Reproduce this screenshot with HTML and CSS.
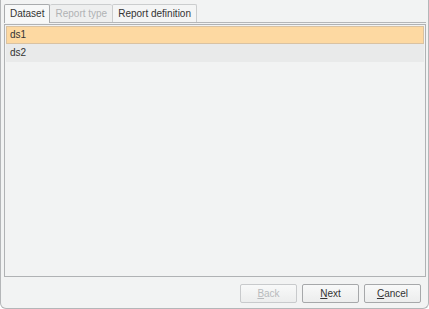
FILE: index.html
```html
<!DOCTYPE html>
<html lang="en">
<head>
  <meta charset="UTF-8" />
  <title>Wizard</title>
  <link rel="stylesheet" href="styles.css">
</head>
<body>
  <div class="window">
    <div class="tabs">
      <div class="tab active">Dataset</div>
      <div class="tab disabled">Report type</div>
      <div class="tab">Report definition</div>
    </div>

    <div class="list">
      <div class="row selected">ds1</div>
      <div class="row alt">ds2</div>
    </div>

    <div class="buttons">
      <button class="btn" disabled><u>B</u>ack</button>
      <button class="btn"><u>N</u>ext</button>
      <button class="btn"><u>C</u>ancel</button>
    </div>
  </div>
</body>
</html>
```

FILE: styles.css
```css
* {
  margin: 0;
  padding: 0;
  box-sizing: border-box;
  font-family: 'Liberation Sans', Arial, sans-serif;
}

body {
  width: 429px;
  height: 309px;
  background: #ffffff;
  overflow: hidden;
}

.window {
  width: 429px;
  height: 309px;
  background: #f2f3f3;
  border: 1px solid #b4b6b8;
  border-top: none;
  border-radius: 0 0 6px 6px;
  display: flex;
  flex-direction: column;
  padding: 4px 2px 0 3px;
}

.tabs {
  display: flex;
  height: 19px;
  border-bottom: 1px solid #b4b6b8;
}

.tab {
  font-size: 10px;
  color: #333;
  height: 18px;
  padding: 3px 5px 0 5px;
  border: 1px solid #cbcdce;
  border-bottom: none;
  border-radius: 2px 2px 0 0;
  background: #f4f5f5;
}

.tab.active {
  background: #f7f8f8;
  border-color: #a9abad;
  height: 19px;
  margin-bottom: -1px;
}

.tab.disabled {
  color: #b0b2b4;
  background: #eeefef;
  border-left: none;
  border-right: none;
}

.list {
  height: 253px;
  margin-top: 1px;
  border: 1px solid #b0b2b4;
  background: #f2f3f3;
  padding: 1px;
}

.row {
  height: 18px;
  font-size: 10px;
  color: #333;
  padding: 3px 4px 0 4px;
}

.row.selected {
  background: #fdd9a2;
  border: 1px solid #d9c2a2;
  padding: 2px 3px 0 3px;
}

.row.alt {
  background: #e9eaea;
}

.buttons {
  display: flex;
  justify-content: flex-end;
  gap: 5px;
  padding: 7px 5px 0 0;
}

.btn {
  width: 57px;
  height: 19px;
  font-size: 10px;
  color: #333;
  background: linear-gradient(#f8f9f9, #eceded);
  border: 1px solid #a6a8aa;
  border-radius: 2px;
}

.btn:disabled {
  color: #b8babc;
  border-color: #c8cacc;
}
```
